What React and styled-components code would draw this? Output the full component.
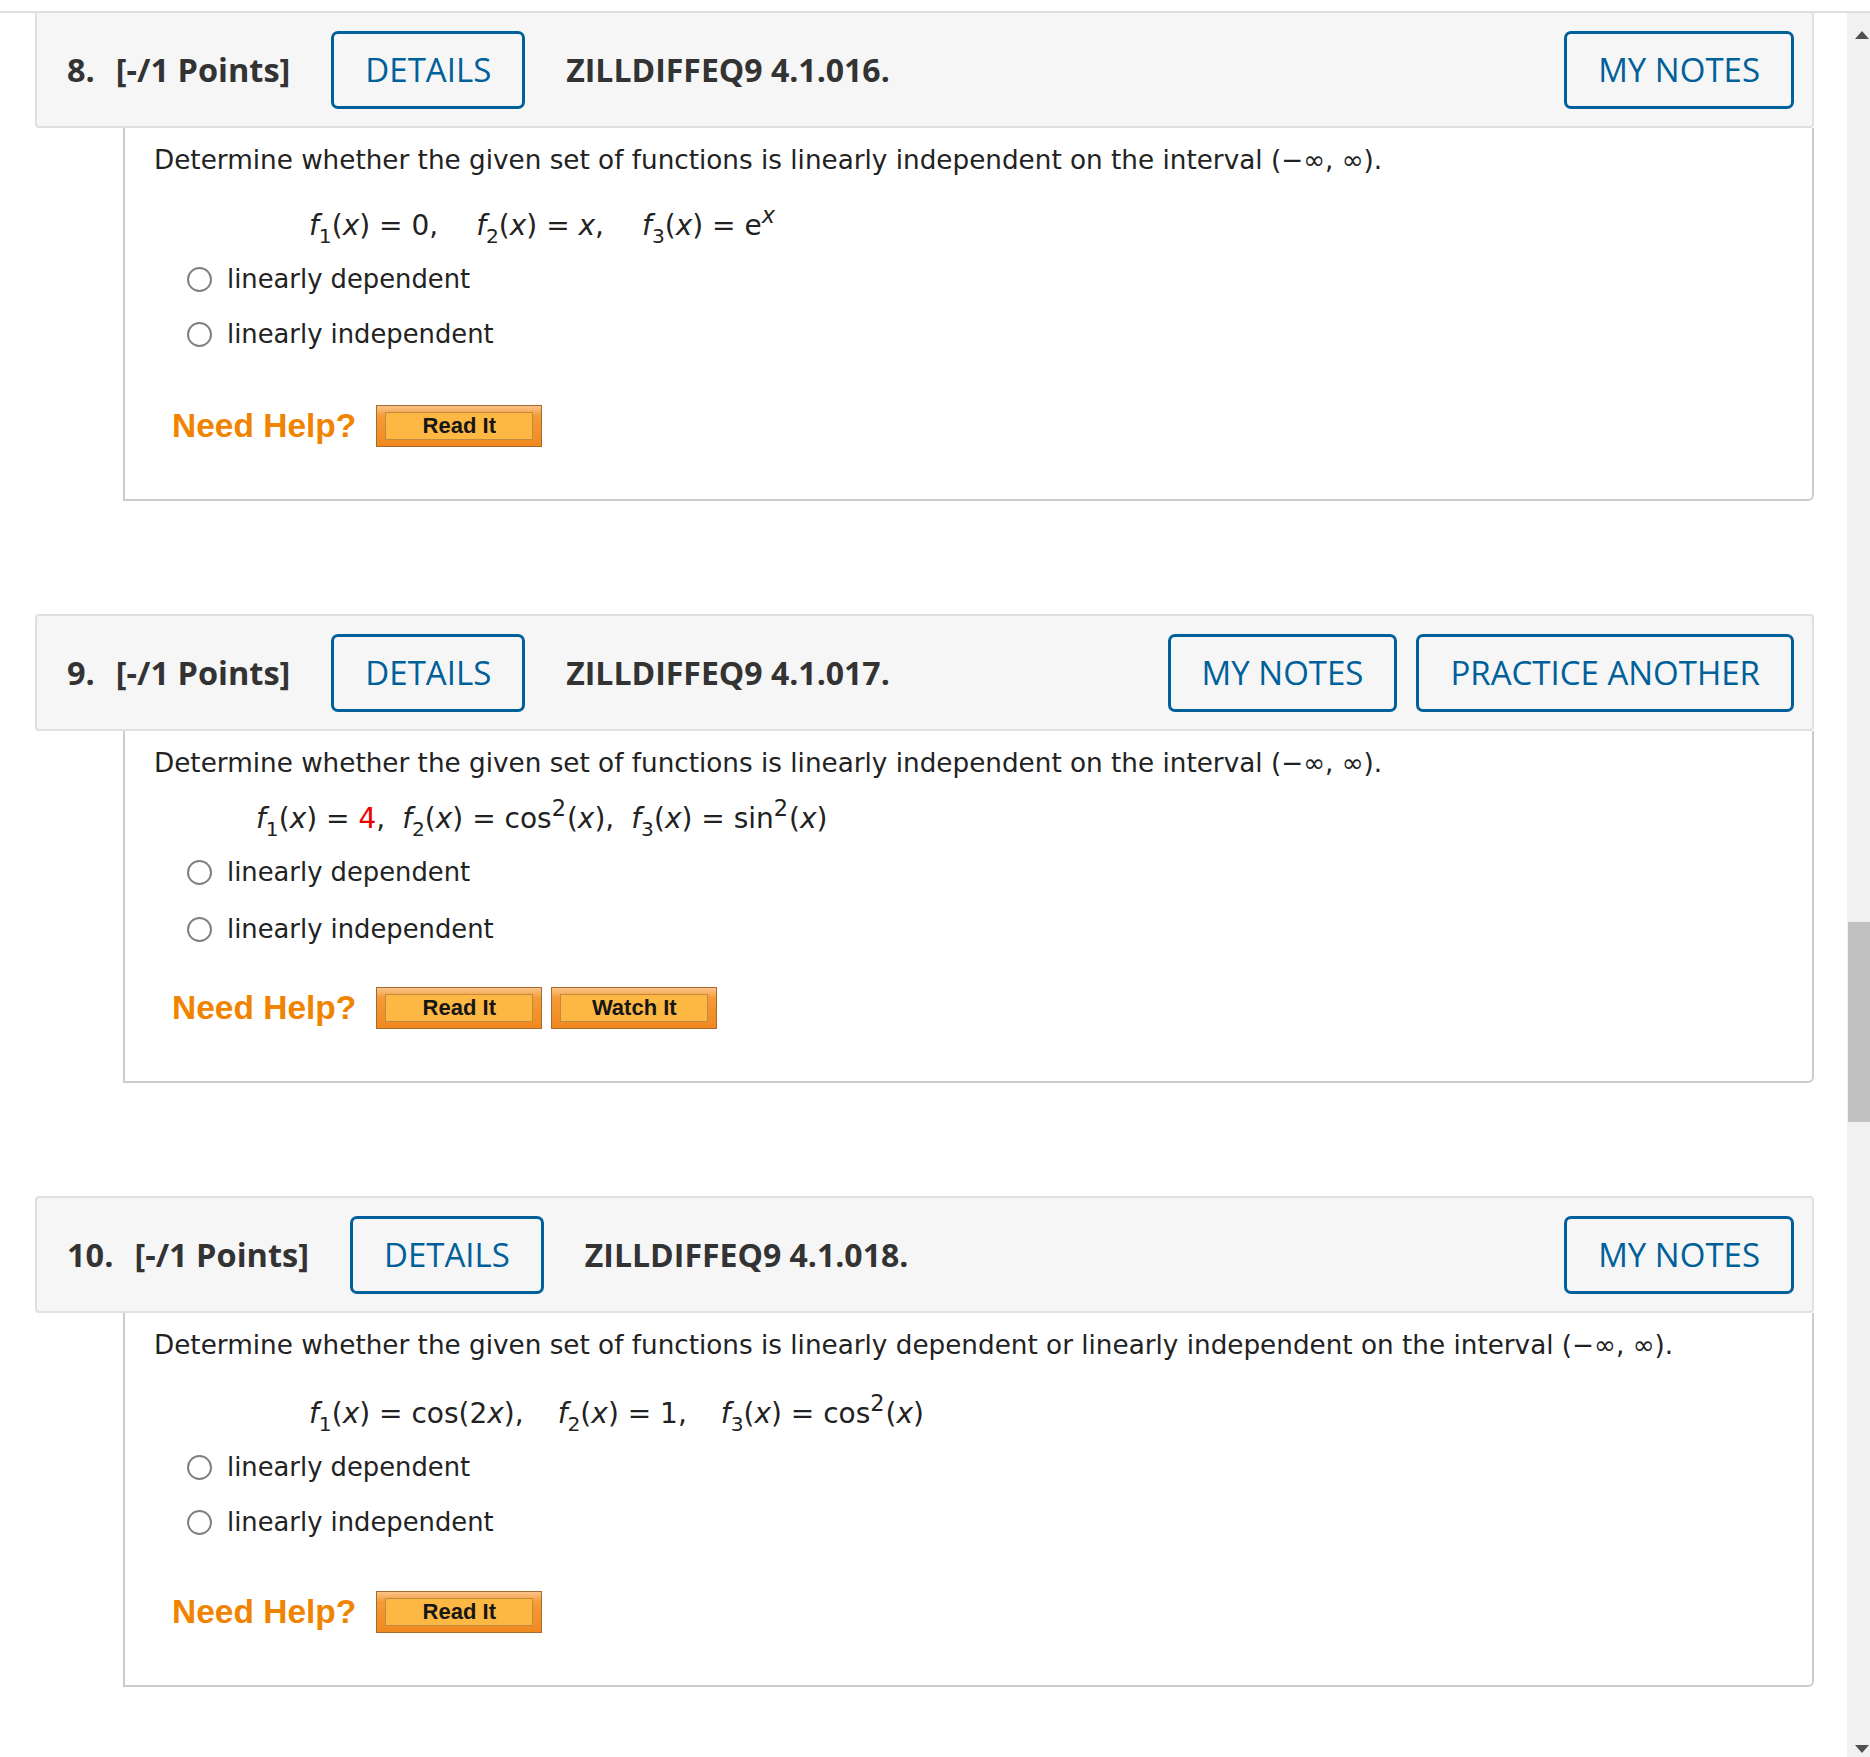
import styled, { createGlobalStyle } from "styled-components";

const GlobalStyle = createGlobalStyle`
  html, body {
    margin: 0;
    padding: 0;
    background: #ffffff;
    overflow: hidden;
  }
  body {
    font-family: "DejaVu Sans", Verdana, sans-serif;
    color: #222222;
  }
`;

const Page = styled.div`
  width: 1870px;
  height: 1757px;
  overflow: hidden;
  display: flex;
  flex-direction: column;
`;

const TopRule = styled.div`
  height: 11px;
  flex: none;
  border-bottom: 2px solid #dedede;
`;

const Row = styled.div`
  flex: 1;
  display: flex;
  min-height: 0;
`;

const Main = styled.main`
  flex: 1;
  padding: 0 33px 0 35px;
`;

const Card = styled.section`
  margin-bottom: 113px;
  &:first-child {
    margin-top: -2px;
  }
`;

const Header = styled.div`
  display: flex;
  align-items: center;
  height: 117px;
  box-sizing: border-box;
  background: #f6f6f6;
  border: 2px solid #e0e0e0;
  border-radius: 4px;
  padding: 0 18px 0 30px;
  font-family: "Open Sans", "Liberation Sans", sans-serif;
  color: #333333;
`;

const Points = styled.div`
  font-size: 32.5px;
  font-weight: 700;
  margin-right: 41px;
  white-space: nowrap;
`;

const Num = styled.span`
  margin-right: 21px;
`;

const Code = styled.div`
  font-size: 32px;
  font-weight: 700;
  margin-left: 41px;
  white-space: nowrap;
`;

const Actions = styled.div`
  margin-left: auto;
  display: flex;
  gap: 19px;
`;

const OutlineButton = styled.button`
  height: 78px;
  box-sizing: border-box;
  padding: 0 31px;
  border: 3px solid #00609a;
  border-radius: 7px;
  background: transparent;
  color: #00609a;
  font-family: "Open Sans", "Liberation Sans", sans-serif;
  font-size: 33px;
  font-weight: 400;
  white-space: nowrap;
  cursor: pointer;
`;

const Body = styled.div`
  margin-left: 88px;
  border: 2px solid #cccccc;
  border-top: none;
  border-bottom-right-radius: 6px;
  padding: 16px 20px 51px 29px;
`;

const Prompt = styled.p`
  margin: 0;
  font-size: 26.25px;
  line-height: 32px;
  color: #222222;
  white-space: nowrap;
`;

const Equation = styled.div`
  display: flex;
  align-items: baseline;
  gap: ${({ $gap }) => $gap}px;
  margin: ${({ $top }) => $top}px 0 0 ${({ $indent }) => $indent}px;
  height: 36px;
  font-size: 28px;
  line-height: 36px;
  white-space: pre;
`;

const Term = styled.span``;

const V = styled.i`
  font-style: italic;
`;

const Sub = styled.sub`
  font-size: 0.72em;
  line-height: 0;
  vertical-align: -0.38em;
`;

const Sup = styled.sup`
  font-size: 0.8em;
  line-height: 0;
  vertical-align: 0.55em;
  margin-right: 1px;
`;

const Red = styled.span`
  color: #ee0000;
`;

const Options = styled.div`
  margin: 15px 0 0 33px;
  display: flex;
  flex-direction: column;
  gap: ${({ $gap }) => $gap}px;
`;

const Option = styled.label`
  display: flex;
  align-items: center;
  height: 40px;
  font-size: 25.8px;
  color: #222222;
  cursor: pointer;
`;

const Radio = styled.span`
  width: 25px;
  height: 25px;
  box-sizing: border-box;
  border: 2px solid #808080;
  border-radius: 50%;
  background: #ffffff;
  margin-right: 15px;
  flex: none;
`;

const HelpRow = styled.div`
  display: flex;
  align-items: center;
  height: 44px;
  margin: ${({ $top }) => $top}px 0 0 18px;
`;

const NeedHelp = styled.span`
  font-family: "Liberation Sans", Arial, sans-serif;
  font-weight: 700;
  font-size: 33.5px;
  color: #f08400;
  margin-right: 20px;
`;

const HelpButton = styled.button`
  width: 166px;
  height: 42px;
  box-sizing: border-box;
  margin-right: 9px;
  padding: 6px 8px;
  display: flex;
  border: 1px solid #a8692c;
  background: linear-gradient(#fbc48a 0%, #f49b38 25%, #f0891e 100%);
  cursor: pointer;
`;

const HelpLabel = styled.span`
  flex: 1;
  display: flex;
  align-items: center;
  justify-content: center;
  border: 1px solid #c48940;
  background: #fdb843;
  font-family: "Liberation Sans", Arial, sans-serif;
  font-weight: 700;
  font-size: 22px;
  color: #161616;
`;

const ScrollTrack = styled.div`
  width: 23px;
  flex: none;
  background: #f1f1f1;
  display: flex;
  flex-direction: column;
`;

const ArrowUp = styled.div`
  margin: 18px 0 0 8px;
  width: 0;
  height: 0;
  border-left: 7px solid transparent;
  border-right: 7px solid transparent;
  border-bottom: 8px solid #505050;
`;

const Thumb = styled.div`
  margin: 883px 0 0 1px;
  height: 200px;
  background: #c1c1c1;
`;

const ArrowDown = styled.div`
  margin: auto 0 4px 8px;
  width: 0;
  height: 0;
  border-left: 7px solid transparent;
  border-right: 7px solid transparent;
  border-top: 8px solid #505050;
`;

const f = (n) => (
  <>
    <V>f</V>
    <Sub>{n}</Sub>(<V>x</V>)
  </>
);

const questions = [
  {
    num: "8.",
    code: "ZILLDIFFEQ9 4.1.016.",
    prompt:
      "Determine whether the given set of functions is linearly independent on the interval (\u2212\u221e, \u221e).",
    eqTop: 32,
    indent: 155,
    gap: 38,
    terms: [
      <>{f(1)} = 0,</>,
      <>{f(2)} = <V>x</V>,</>,
      <>
        {f(3)} = e<Sup><V>x</V></Sup>
      </>,
    ],
    optionGap: 15,
    helpTop: 50,
    practice: false,
    watch: false,
  },
  {
    num: "9.",
    code: "ZILLDIFFEQ9 4.1.017.",
    prompt:
      "Determine whether the given set of functions is linearly independent on the interval (\u2212\u221e, \u221e).",
    eqTop: 22,
    indent: 102,
    gap: 17,
    terms: [
      <>
        {f(1)} = <Red>4</Red>,
      </>,
      <>
        {f(2)} = cos<Sup>2</Sup>(<V>x</V>),
      </>,
      <>
        {f(3)} = sin<Sup>2</Sup>(<V>x</V>)
      </>,
    ],
    optionGap: 17,
    helpTop: 37,
    practice: true,
    watch: true,
  },
  {
    num: "10.",
    code: "ZILLDIFFEQ9 4.1.018.",
    prompt:
      "Determine whether the given set of functions is linearly dependent or linearly independent on the interval (\u2212\u221e, \u221e).",
    eqTop: 35,
    indent: 155,
    gap: 34,
    terms: [
      <>
        {f(1)} = cos(2<V>x</V>),
      </>,
      <>{f(2)} = 1,</>,
      <>
        {f(3)} = cos<Sup>2</Sup>(<V>x</V>)
      </>,
    ],
    optionGap: 15,
    helpTop: 48,
    practice: false,
    watch: false,
  },
];

function Question({ q }) {
  return (
    <Card>
      <Header>
        <Points>
          <Num>{q.num}</Num>[-/1 Points]
        </Points>
        <OutlineButton>DETAILS</OutlineButton>
        <Code>{q.code}</Code>
        <Actions>
          <OutlineButton>MY NOTES</OutlineButton>
          {q.practice && <OutlineButton>PRACTICE ANOTHER</OutlineButton>}
        </Actions>
      </Header>
      <Body>
        <Prompt>{q.prompt}</Prompt>
        <Equation $top={q.eqTop} $indent={q.indent} $gap={q.gap}>
          {q.terms.map((t, i) => (
            <Term key={i}>{t}</Term>
          ))}
        </Equation>
        <Options $gap={q.optionGap}>
          <Option>
            <Radio />
            linearly dependent
          </Option>
          <Option>
            <Radio />
            linearly independent
          </Option>
        </Options>
        <HelpRow $top={q.helpTop}>
          <NeedHelp>Need Help?</NeedHelp>
          <HelpButton>
            <HelpLabel>Read It</HelpLabel>
          </HelpButton>
          {q.watch && (
            <HelpButton>
              <HelpLabel>Watch It</HelpLabel>
            </HelpButton>
          )}
        </HelpRow>
      </Body>
    </Card>
  );
}

export default function App() {
  return (
    <Page>
      <GlobalStyle />
      <TopRule />
      <Row>
        <Main>
          {questions.map((q) => (
            <Question key={q.num} q={q} />
          ))}
        </Main>
        <ScrollTrack>
          <ArrowUp />
          <Thumb />
          <ArrowDown />
        </ScrollTrack>
      </Row>
    </Page>
  );
}
